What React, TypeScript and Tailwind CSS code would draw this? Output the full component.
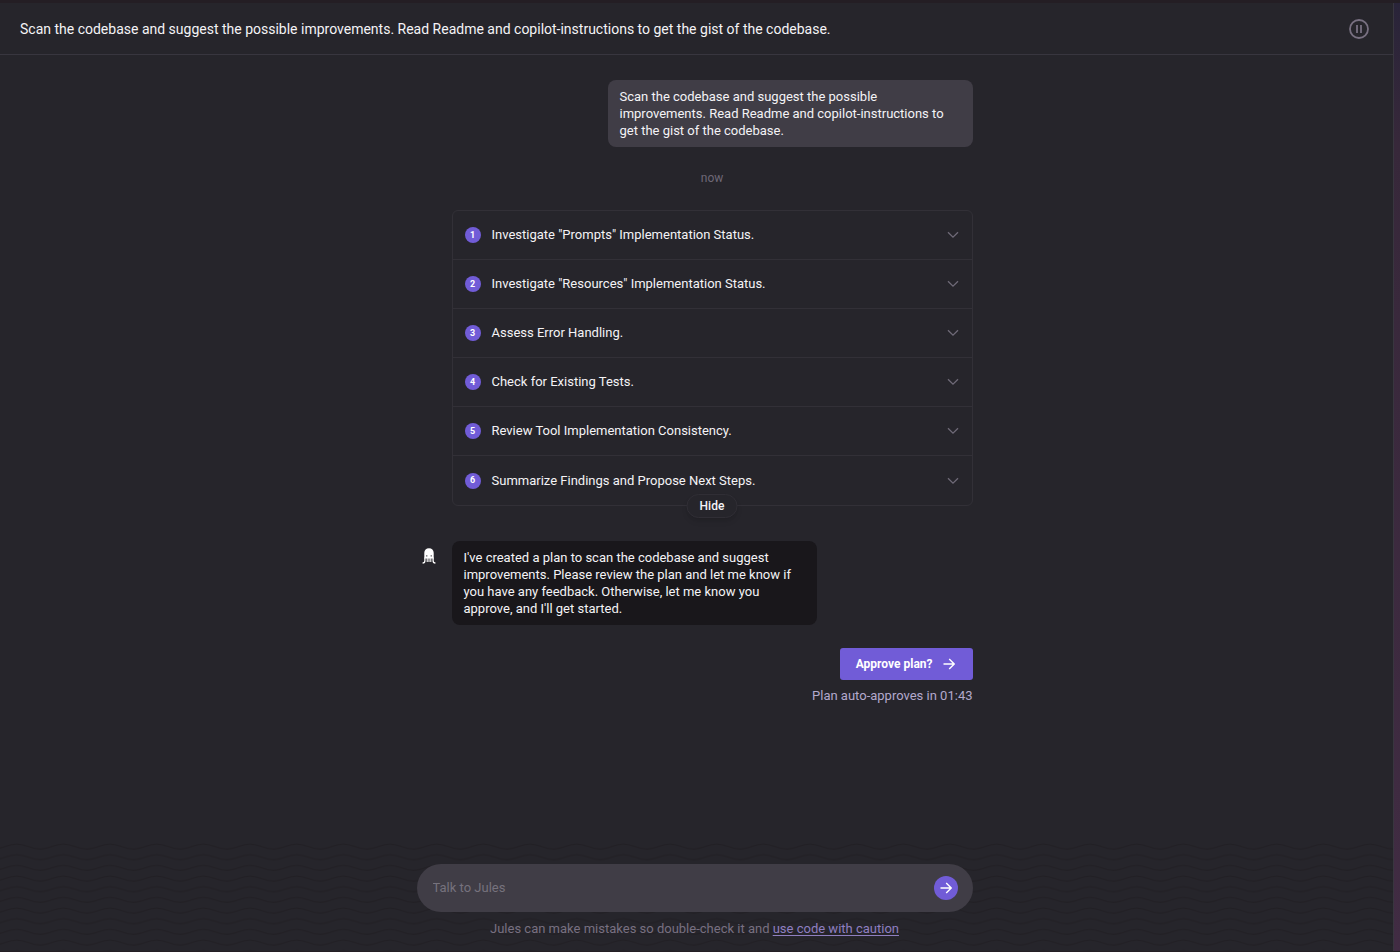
import React, { useState } from "react";

const steps: string[] = [
  'Investigate "Prompts" Implementation Status.',
  'Investigate "Resources" Implementation Status.',
  "Assess Error Handling.",
  "Check for Existing Tests.",
  "Review Tool Implementation Consistency.",
  "Summarize Findings and Propose Next Steps.",
];

function PauseIcon() {
  return (
    <svg width="20" height="20" viewBox="0 0 20 20" fill="none" aria-hidden="true">
      <circle cx="10" cy="10" r="9" stroke="#787081" strokeWidth="1.8" />
      <path d="M8 6v8M12 6v8" stroke="#787081" strokeWidth="1.8" />
    </svg>
  );
}

function ChevronIcon() {
  return (
    <svg width="12" height="8" viewBox="0 0 12 8" fill="none" aria-hidden="true">
      <path d="M1 1.2l5 5 5-5" stroke="#6f6a78" strokeWidth="1.3" />
    </svg>
  );
}

function ArrowIcon() {
  return (
    <svg width="12" height="12" viewBox="0 0 12 12" fill="none" aria-hidden="true">
      <path d="M0.5 6h10.5M6.2 1l5 5-5 5" stroke="#fff" strokeWidth="1.4" />
    </svg>
  );
}

function OctopusIcon() {
  return (
    <svg width="14" height="16" viewBox="0 0 14 16" fill="none" aria-hidden="true">
      <path
        fill="#fff"
        fillRule="evenodd"
        d="M2.3 10.4V4.8C2.3 2 4.2.2 7 .2s4.7 1.8 4.7 4.6v5.6H2.3ZM4.300 7.300v1.300h1V7.300h-1Zm4.400 0v1.300h1V7.300h-1Z"
      />
      <path
        d="M2.9 9.5v3.3c0 1.4-.8 2.200-2.300 2.200M11.100 9.500v3.300c0 1.400.8 2.200 2.300 2.200"
        stroke="#fff"
        strokeWidth="1.300"
      />
      <path d="M5.200 9.500v4.500M7 9.500v4.500M8.800 9.500v4.500" stroke="#fff" strokeWidth="1.100" />
    </svg>
  );
}

function Waves() {
  return (
    <svg className="absolute inset-x-0 bottom-0 h-[109px] w-full" aria-hidden="true">
      <defs>
        <pattern id="waves" width="140" height="32" patternUnits="userSpaceOnUse" patternTransform="scale(0.33333)">
          <path
            d="M-20 21C10 21 20 6 50 6S90 21 120 21S160 6 190 6"
            fill="none"
            stroke="#222025"
            strokeWidth="4"
          />
        </pattern>
      </defs>
      <rect width="100%" height="100%" fill="url(#waves)" />
    </svg>
  );
}

export default function App() {
  const [open, setOpen] = useState(true);
  const [draft, setDraft] = useState("");

  return (
    <div className="flex min-h-screen flex-col bg-[#241e24] pb-px pt-[3px] font-['Roboto',sans-serif] text-[13px] text-[#f4f3f6]">
      <div className="flex flex-1 bg-linear-to-b from-[#292439] via-[#37283a] via-15% to-[#412c43] pr-[6px]">
        <div className="flex min-w-0 flex-1 flex-col border-r border-[#38363f] bg-[#26252b]">
          <header className="flex h-[52px] items-center justify-between border-b border-[#38363f] pl-5 pr-6">
            <h1 className="text-[14px] leading-5">
              Scan the codebase and suggest the possible improvements. Read Readme and copilot-instructions to get the
              gist of the codebase.
            </h1>
            <button type="button" aria-label="Pause">
              <PauseIcon />
            </button>
          </header>

          <div className="relative flex flex-1 flex-col pr-1">
            <Waves />
            <main className="relative mx-auto flex w-full max-w-[556px] flex-1 flex-col pl-[35px] pt-[25px]">
              <p className="w-[365px] self-end rounded-lg bg-[#403d46] px-3 py-2 leading-[17px]">
                Scan the codebase and suggest the possible improvements. Read Readme and copilot-instructions to get the
                gist of the codebase.
              </p>
              <p className="py-6 text-center text-[12px] leading-[15px] text-[#6e6877]">now</p>

              <section className="relative rounded-md border border-[#323037]">
                <ol>
                  {open &&
                    steps.map((step, i) => (
                      <li key={step} className="h-[49px] border-b border-[#323037] last:border-b-0">
                        <button type="button" className="flex h-full w-full items-center pl-3 pr-[13px] text-left">
                          <span className="flex size-4 items-center justify-center rounded-full bg-[#715cd7] text-[9px] font-bold leading-none text-white">
                            {i + 1}
                          </span>
                          <span className="flex-1 pl-[11px] leading-5">{step}</span>
                          <ChevronIcon />
                        </button>
                      </li>
                    ))}
                </ol>
                <button
                  type="button"
                  onClick={() => setOpen(!open)}
                  className="absolute -bottom-[13px] left-1/2 h-6 w-[51px] -translate-x-1/2 rounded-full border border-[#302e35] bg-[#26252b] text-[12px] font-medium leading-5 shadow-md"
                >
                  {open ? "Hide" : "Show"}
                </button>
              </section>

              <div className="-ml-[30px] mt-[35px] flex items-start gap-4">
                <span className="pt-[7px]">
                  <OctopusIcon />
                </span>
                <p className="w-[365px] rounded-lg bg-[#19171b] px-3 py-2 leading-[17px]">
                  I've created a plan to scan the codebase and suggest improvements. Please review the plan and let me
                  know if you have any feedback. Otherwise, let me know you approve, and I'll get started.
                </p>
              </div>

              <div className="flex flex-col items-end pt-[23px]">
                <button
                  type="button"
                  className="flex h-8 items-center gap-[10px] rounded-[3px] bg-[#715cd7] pl-4 pr-[18px] text-[12px] font-bold text-white"
                >
                  Approve plan?
                  <ArrowIcon />
                </button>
                <p className="pt-[6px] leading-5 text-[#b3a9cd]">Plan auto-approves in 01:43</p>
              </div>
            </main>

            <footer className="relative mx-auto w-full max-w-[556px] pb-3">
              <form
                onSubmit={(e: React.FormEvent) => e.preventDefault()}
                className="flex h-12 items-center rounded-full bg-[#403d46] pl-4 pr-[15px]"
              >
                <input
                  type="text"
                  aria-label="Talk to Jules"
                  placeholder="Talk to Jules"
                  value={draft}
                  onChange={(e) => setDraft(e.target.value)}
                  className="min-w-0 flex-1 bg-transparent leading-5 outline-none placeholder:text-[#76727d]"
                />
                <button
                  type="submit"
                  aria-label="Send"
                  className="flex size-6 items-center justify-center rounded-full bg-[#715cd7]"
                >
                  <ArrowIcon />
                </button>
              </form>
              <p className="pt-[7px] text-center leading-5 text-[#787081]">
                Jules can make mistakes so double-check it and{" "}
                <a href="#caution" className="text-[#8f7fc0] underline underline-offset-2">
                  use code with caution
                </a>
              </p>
            </footer>
          </div>
        </div>
      </div>
    </div>
  );
}
